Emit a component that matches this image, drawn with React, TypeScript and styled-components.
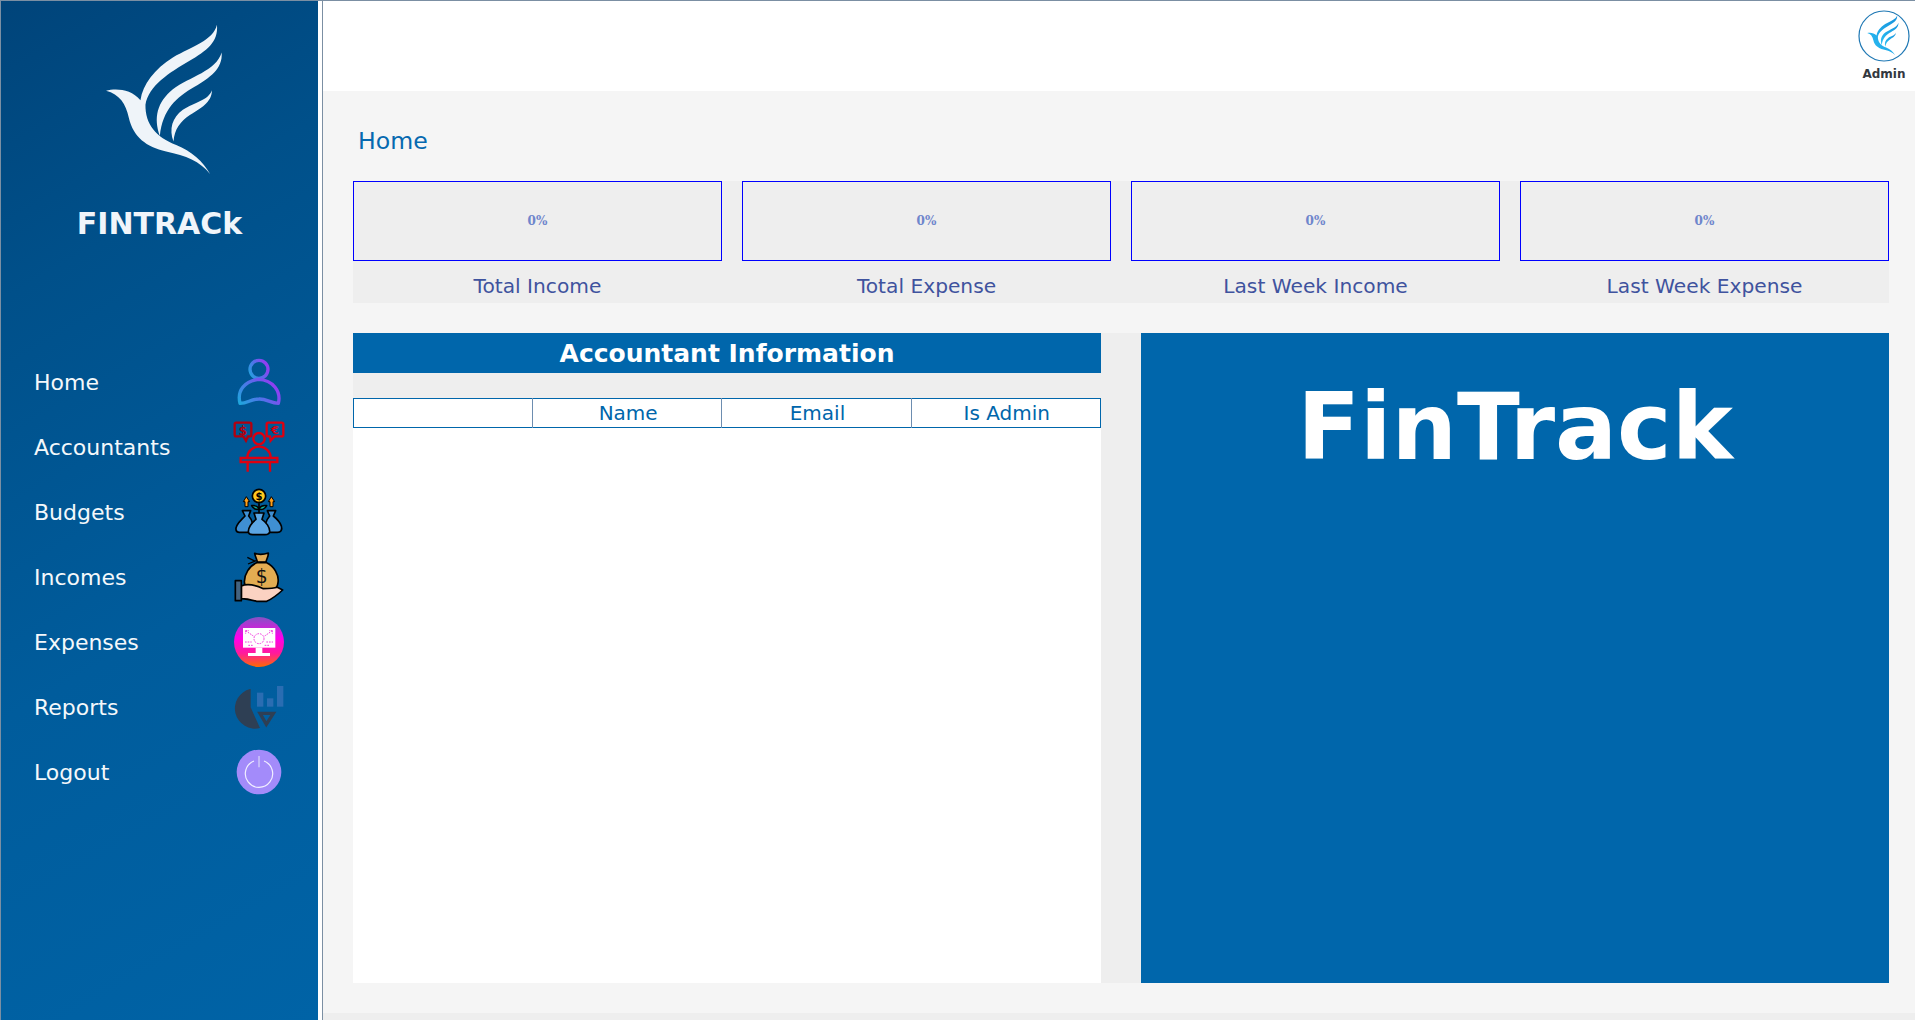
import React from "react";
import styled, { createGlobalStyle } from "styled-components";

const Global = createGlobalStyle`
  html, body { margin: 0; padding: 0; background: #fff; }
  * { box-sizing: border-box; }
  body { font-family: "DejaVu Sans", sans-serif; }
`;

const Page = styled.div`
  width: 1915px; height: 1020px; display: flex; overflow: hidden;
  border-top: 1px solid #7b8fa3; background: #fff;
`;
const Sidebar = styled.aside`
  width: 318px; flex: none; border-left: 1px solid #7b8fa3;
  background: linear-gradient(150deg, #00447a 0%, #00508a 25%, #005c9c 60%, #0063a6 100%);
  display: flex; flex-direction: column;
`;
const Brand = styled.div`
  display: flex; flex-direction: column; align-items: center;
  padding-top: 23px; height: 348px;
`;
const BrandMark = styled.svg`width: 117px; height: 152px; display: block; margin-left: 10px;`;
const BrandName = styled.div`
  margin-top: 30px; color: #f0f5fa; font-size: 30px; font-weight: 700; line-height: 36px;
`;
const Nav = styled.nav`display: flex; flex-direction: column;`;
const NavRow = styled.div`
  height: 65px; display: flex; align-items: center; justify-content: space-between;
  padding: 0 32px 0 33px; color: #f4f8fb; font-size: 22px;
`;
const NavLabel = styled.span`padding-top: 2px;`;
const NavIcon = styled.svg`width: 54px; height: 54px; display: block; flex: none;`;
const Main = styled.main`
  flex: 1; min-width: 0; margin-left: 4px; border-left: 1px solid #7b8fa3;
  display: flex; flex-direction: column;
`;
const TopBar = styled.header`
  height: 90px; flex: none; background: #fff; display: flex; justify-content: flex-end;
  padding: 9px 4px 0 0;
`;
const Profile = styled.div`
  width: 54px; display: flex; flex-direction: column; align-items: center;
`;
const ProfileMark = styled.svg`width: 52px; height: 52px; display: block;`;
const ProfileName = styled.div`
  margin-top: 4px; font-size: 12px; font-weight: 700; line-height: 16px; color: #333840;
`;
const Content = styled.div`
  flex: 1; background: #f5f5f5; padding: 0 26px 0 30px; display: flex; flex-direction: column;
`;
const PageTitle = styled.h1`
  margin: 0; height: 90px; padding: 35px 0 0 5px; font-size: 23.6px; font-weight: 400;
  line-height: 30px; color: #0569b0;
`;
const Stats = styled.section`
  display: grid; grid-template-columns: repeat(4, 1fr); gap: 20px; background: #eee;
`;
const Stat = styled.div`display: flex; flex-direction: column;`;
const Gauge = styled.div`
  height: 80px; border: 1px solid #0000ff; display: flex; align-items: center; justify-content: center;
  font-family: "DejaVu Serif", serif; font-size: 12px; font-weight: 700; color: #6f86cc;
`;
const StatLabel = styled.div`
  height: 42px; display: flex; align-items: center; justify-content: center;
  font-size: 20.2px; color: #3f539e; padding-top: 8px;
`;
const Panels = styled.section`
  margin-top: 30px; height: 650px; display: grid; grid-template-columns: 748px 748px; gap: 40px; background: #eee;
`;
const AccountantPanel = styled.div`display: flex; flex-direction: column;`;
const PanelHeading = styled.h2`
  margin: 0; height: 40px; background: #0066ab; color: #fff; text-align: center;
  font-size: 25px; font-weight: 700; line-height: 42px;
`;
const TableWrap = styled.div`margin-top: 25px; flex: 1; background: #fff;`;
const Table = styled.table`
  width: 100%; border-collapse: collapse; table-layout: fixed; border: 1px solid #0066ab;
`;
const HeadCell = styled.th`
  height: 29px; padding: 0 0 0 2px; border-left: 1px solid #6d8db0; font-size: 20px; font-weight: 400;
  color: #0066ab; line-height: 27px; text-align: center; background: #fff;
  &:first-child { width: 179px; border-left: 0; }
`;
const Showcase = styled.div`
  background: #0066ab; display: flex; justify-content: center; padding-top: 35px;
  color: #fff; font-size: 92px; font-weight: 700; line-height: 120px;
`;
const BottomStrip = styled.div`height: 7px; flex: none; background: #eee; margin: 30px -26px 0 -30px;`;

const wing1 =
  "M320 270C350 262 395 265 423 298C430 250 465 205 520 170C580 135 640 120 652 72C657 125 620 150 570 180C510 215 447 255 438 312C437 370 470 410 530 432C575 450 610 480 632 520C600 480 560 465 500 452C440 437 402 410 388 350C380 310 360 280 320 270Z";
const wing2 =
  "M481 405C462 350 472 305 520 265C570 228 650 210 666 155C670 205 630 230 585 258C530 290 490 325 481 405Z";
const wing3 =
  "M522 422C508 385 518 350 550 327C585 303 625 300 637 268C637 305 602 322 572 342C542 362 525 385 522 422Z";

const BirdPaths = ({ fill }: { fill: string }) => (
  <g fill={fill}>
    <path d={wing1} />
    <path d={wing2} />
    <path d={wing3} />
  </g>
);

const HomeIcon = () => (
  <NavIcon viewBox="696 45 162 162">
    <defs>
      <linearGradient id="homeGrad" x1="0" y1="1" x2="1" y2="0.5">
        <stop offset="0" stopColor="#1fa6dc" />
        <stop offset="0.5" stopColor="#4f74e8" />
        <stop offset="1" stopColor="#8f3ff2" />
      </linearGradient>
    </defs>
    <g fill="none" stroke="url(#homeGrad)" strokeWidth="10">
      <circle cx="777" cy="88" r="27" />
      <path d="M720 190C710 150 735 124 775 118C820 120 844 155 835 190C812 190 800 176 777 177C750 177 745 190 720 190Z" strokeLinejoin="round" />
    </g>
  </NavIcon>
);

const AccountantsIcon = () => (
  <NavIcon viewBox="696 240 162 162">
    <g fill="none" strokeWidth="7">
      <g stroke="#b3000f">
        <path d="M709 248H749Q754 248 754 253V284Q754 289 749 289H744L738 302L730 289H709Q704 289 704 284V253Q704 248 709 248Z" />
      </g>
      <g stroke="#dd0010">
        <path d="M805 248H845Q850 248 850 253V284Q850 289 845 289H824L812 302L810 289H805Q800 289 800 284V253Q800 248 805 248Z" />
        <circle cx="777" cy="296" r="17" />
        <path d="M742 352A35 32 0 0 1 812 352" />
        <path d="M722 354H832V366H722Z" />
        <path d="M743 366V395M810 366V395" />
      </g>
    </g>
    <text x="729" y="284" fontSize="36" fontWeight="700" fontFamily="DejaVu Sans, sans-serif" fill="#b3000f" textAnchor="middle">$</text>
    <text x="825" y="282" fontSize="34" fontWeight="700" fontFamily="DejaVu Sans, sans-serif" fill="#dd0010" textAnchor="middle">€</text>
  </NavIcon>
);

const BudgetsIcon = () => (
  <NavIcon viewBox="696 435 162 162">
    <g stroke="#000" strokeWidth="5" strokeLinejoin="round">
      <path d="M727 512H752L746 528C758 540 764 565 755 577H718C706 577 706 565 711 556C718 544 728 536 735 528Z" fill="#3f8fd3" />
      <path d="M802 512H827L820 528C830 536 840 546 844 558C848 570 842 577 832 577H795C790 565 798 540 809 528Z" fill="#3f8fd3" />
      <path d="M762 519H792L786 538C798 546 810 562 809 575C808 582 802 584 795 584H758C750 584 745 580 745 574C746 560 758 546 768 538Z" fill="#5ca6e4" />
      <path d="M777 490V520" fill="none" />
      <path d="M777 505C768 494 762 496 755 497C760 507 770 510 777 507C785 510 795 507 800 497C792 496 786 494 777 505Z" fill="#12b5a0" />
      <circle cx="777" cy="468" r="20" fill="#ffc81e" />
      <path d="M739 470L730 485H735V500H744V485H749Z" fill="#ff9f1a" strokeWidth="3" />
      <path d="M814 470L805 485H810V500H819V485H824Z" fill="#ff9f1a" strokeWidth="3" />
    </g>
    <text x="777" y="479" fontSize="30" fontWeight="700" fontFamily="DejaVu Sans, sans-serif" fill="#000" textAnchor="middle">$</text>
  </NavIcon>
);

const IncomesIcon = () => (
  <NavIcon viewBox="696 30 162 162">
    <g stroke="#000" strokeWidth="5" strokeLinejoin="round">
      <path d="M742 52L766 64M744 72L768 62" fill="none" strokeWidth="4" />
      <path d="M764 40C775 44 790 44 805 39C806 48 800 56 798 66H772C770 56 765 48 764 40Z" fill="#e2ad59" />
      <path d="M770 68H800C822 78 838 105 834 128C832 150 812 158 785 158C755 158 733 148 733 125C733 103 748 78 770 68Z" fill="#e3ac52" />
      <path d="M724 138C745 128 768 136 790 146C800 146 820 146 832 142L848 150C835 162 820 175 800 184H770C755 180 740 176 724 176Z" fill="#fbd2c2" />
      <rect x="706" y="122" width="18" height="60" fill="#44637f" />
    </g>
    <text x="785" y="128" fontSize="56" fontFamily="DejaVu Sans, sans-serif" fill="#111" textAnchor="middle">$</text>
  </NavIcon>
);

const ExpensesIcon = () => (
  <NavIcon viewBox="696 225 162 162">
    <defs>
      <linearGradient id="expGrad" x1="0" y1="0" x2="0" y2="1">
        <stop offset="0" stopColor="#8453c4" />
        <stop offset="0.42" stopColor="#ff00ea" />
        <stop offset="0.72" stopColor="#ff1a9c" />
        <stop offset="1" stopColor="#ff6a00" />
      </linearGradient>
    </defs>
    <circle cx="777" cy="306" r="75" fill="url(#expGrad)" />
    <rect x="729" y="264" width="97" height="59" fill="#fff" />
    <rect x="767" y="323" width="20" height="16" fill="#fff" />
    <rect x="744" y="339" width="66" height="9" fill="#fff" />
    <g fill="none" stroke="#f23fe0" strokeWidth="3" strokeDasharray="5 3">
      <circle cx="777" cy="296" r="15" />
      <path d="M737 272L760 288M737 272H747M737 272V282M817 272L794 288M817 272H807M817 272V282M735 306H755M799 306H819M745 316H760M794 316H809" />
    </g>
  </NavIcon>
);

const ReportsIcon = () => (
  <NavIcon viewBox="696 420 162 162">
    <path d="M750 447A60 60 0 0 0 780 564L752 502V447Z" fill="#2e3f54" />
    <g fill="#2a6db2">
      <rect x="771" y="458" width="19" height="42" />
      <rect x="801" y="475" width="19" height="25" />
      <rect x="831" y="438" width="19" height="62" />
    </g>
    <path d="M780 520H820L799 553Z" fill="none" stroke="#2e3f54" strokeWidth="10" strokeLinejoin="miter" />
  </NavIcon>
);

const LogoutIcon = () => (
  <NavIcon viewBox="696 615 162 162">
    <circle cx="777" cy="696" r="67" fill="#a38bfa" />
    <path d="M762 663A41 41 0 1 0 792 663" fill="none" stroke="#f2f0ff" strokeWidth="3.5" />
    <path d="M777 648V682" stroke="#d6d0fa" strokeWidth="4" />
  </NavIcon>
);

const navItems: { label: string; icon: React.ReactNode }[] = [
  { label: "Home", icon: <HomeIcon /> },
  { label: "Accountants", icon: <AccountantsIcon /> },
  { label: "Budgets", icon: <BudgetsIcon /> },
  { label: "Incomes", icon: <IncomesIcon /> },
  { label: "Expenses", icon: <ExpensesIcon /> },
  { label: "Reports", icon: <ReportsIcon /> },
  { label: "Logout", icon: <LogoutIcon /> },
];

const stats = ["Total Income", "Total Expense", "Last Week Income", "Last Week Expense"];

export default function App() {
  return (
    <>
      <Global />
      <Page>
        <Sidebar>
          <Brand>
            <BrandMark viewBox="320 70 350 455">
              <BirdPaths fill="#eff4f9" />
            </BrandMark>
            <BrandName>FINTRACk</BrandName>
          </Brand>
          <Nav>
            {navItems.map((item) => (
              <NavRow key={item.label}>
                <NavLabel>{item.label}</NavLabel>
                {item.icon}
              </NavRow>
            ))}
          </Nav>
        </Sidebar>
        <Main>
          <TopBar>
            <Profile>
              <ProfileMark viewBox="0 0 52 52">
                <defs>
                  <linearGradient id="adminGrad" x1="1" y1="0" x2="0" y2="1">
                    <stop offset="0" stopColor="#1692dc" />
                    <stop offset="1" stopColor="#2cc0f4" />
                  </linearGradient>
                </defs>
                <circle cx="26" cy="26" r="25" fill="#fff" stroke="#1f78b4" strokeWidth="1.2" />
                <svg x="9" y="5" width="32" height="41" viewBox="320 70 350 455">
                  <BirdPaths fill="url(#adminGrad)" />
                </svg>
              </ProfileMark>
              <ProfileName>Admin</ProfileName>
            </Profile>
          </TopBar>
          <Content>
            <PageTitle>Home</PageTitle>
            <Stats>
              {stats.map((label) => (
                <Stat key={label}>
                  <Gauge>0%</Gauge>
                  <StatLabel>{label}</StatLabel>
                </Stat>
              ))}
            </Stats>
            <Panels>
              <AccountantPanel>
                <PanelHeading>Accountant Information</PanelHeading>
                <TableWrap>
                  <Table>
                    <thead>
                      <tr>
                        <HeadCell />
                        <HeadCell>Name</HeadCell>
                        <HeadCell>Email</HeadCell>
                        <HeadCell>Is Admin</HeadCell>
                      </tr>
                    </thead>
                  </Table>
                </TableWrap>
              </AccountantPanel>
              <Showcase>FinTrack</Showcase>
            </Panels>
            <BottomStrip />
          </Content>
        </Main>
      </Page>
    </>
  );
}
